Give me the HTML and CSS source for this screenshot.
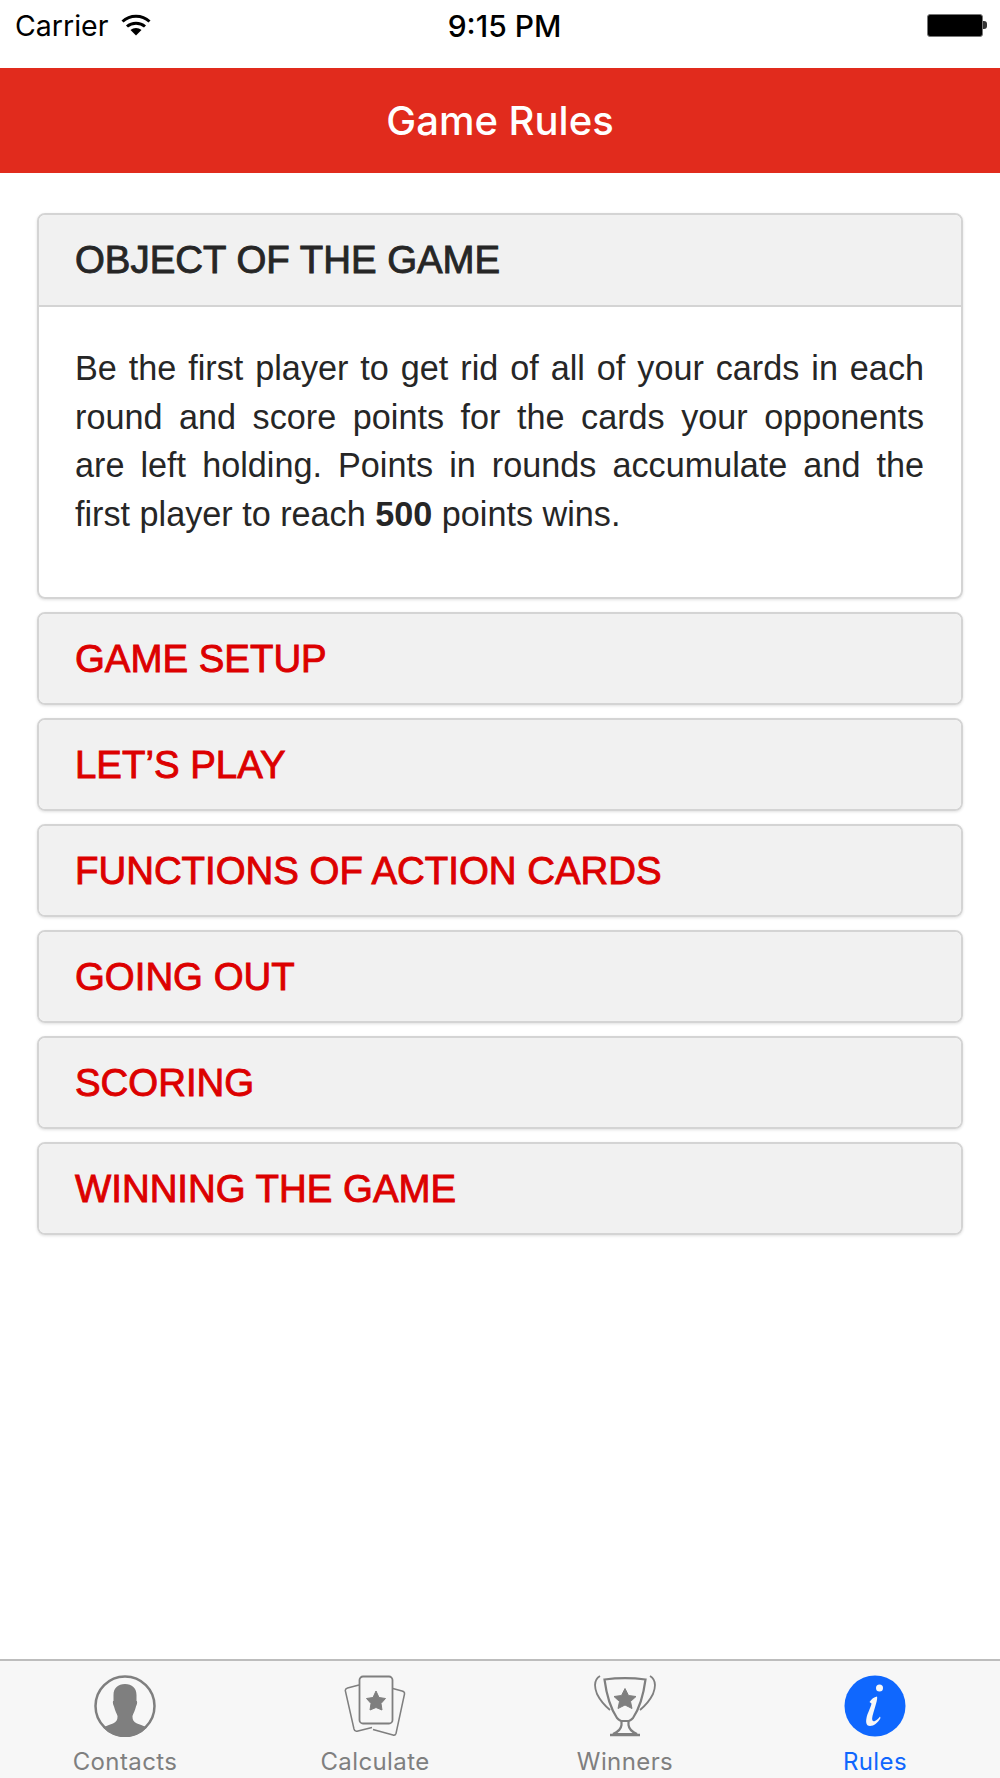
FILE: index.html
```html
<!doctype html>
<html>
    <head>
        <meta name="viewport" content="width=device-width, initial-scale=1">
        <title>Game Rules</title>
        <link rel="stylesheet" href="styles.css">
    </head>
    <body>
        <div class="status-bar">
            <div class="status-left">
                <span>Carrier</span>
                <svg class="wifi" viewBox="0 0 30 22" width="30" height="22">
                    <path d="M1.500 7.500C9 .5 21 .5 28.500 7.500" fill="none" stroke="#000" stroke-width="3"/>
                    <path d="M6 12.500C11 8 19 8 24 12.500" fill="none" stroke="#000" stroke-width="3"/>
                    <path d="M9.500 16C12.500 13.300 17.500 13.300 20.500 16L15 21.500Z" fill="#000"/>
                </svg>
            </div>
            <div class="status-time">9:15 PM</div>
            <div class="status-right">
                <div class="battery"></div>
                <div class="battery-tip"></div>
            </div>
        </div>
        <div class="nav-bar">Game Rules</div>
        <div class="content">
            <div class="panel">
                <div class="panel-heading panel-heading-open">OBJECT OF THE GAME</div>
                <div class="panel-body">
                    <p>Be the first player to get rid of all of your cards in each round and score points for the cards your opponents are left holding. Points in rounds accumulate and the first player to reach <strong>500</strong> points wins.</p>
                </div>
            </div>
            <div class="panel"><div class="panel-heading">GAME SETUP</div></div>
            <div class="panel"><div class="panel-heading">LET’S PLAY</div></div>
            <div class="panel"><div class="panel-heading">FUNCTIONS OF ACTION CARDS</div></div>
            <div class="panel"><div class="panel-heading">GOING OUT</div></div>
            <div class="panel"><div class="panel-heading">SCORING</div></div>
            <div class="panel"><div class="panel-heading">WINNING THE GAME</div></div>
        </div>
        <div class="tab-bar">
            <div class="tab">
                <svg viewBox="0 0 62 62" width="62" height="62">
                    <circle cx="31" cy="31" r="29.500" fill="none" stroke="#7f7f7f" stroke-width="2.500"/>
                    <path d="M31 9C38 9 42.500 13 42.500 20L42.500 26C43.500 26 43.300 29 42 31.500C41 36 39 39 38.500 41C38.300 45 39.500 47 43 48.500C47 50 50 51 53 52.500A29.500 29.500 0 0 1 9 52.500C12 51 15 50 19 48.500C22.500 47 23.700 45 23.500 41C23 39 21 36 20 31.500C18.700 29 18.500 26 19.500 26L19.500 20C19.500 13 24 9 31 9Z" fill="#7f7f7f"/>
                </svg>
                <span>Contacts</span>
            </div>
            <div class="tab">
                <svg viewBox="0 0 62 62" width="62" height="62">
                    <path d="M15 10L3.500 13C1.800 13.500 1 14.500 1.400 16L10 54C10.500 56 11.500 56.500 13 56.200L28 52.500" fill="none" stroke="#7f7f7f" stroke-width="1.500"/>
                    <path d="M47 13L58 16C60 16.500 60.800 17.500 60.500 19L52 58.500C51.500 60 50.500 60.500 49 60L29 54.500" fill="none" stroke="#7f7f7f" stroke-width="1.500"/>
                    <rect x="15.500" y="1.500" width="33" height="47" rx="3.500" fill="#f7f7f7" stroke="#7f7f7f" stroke-width="1.800"/>
                    <path d="M32 16L35 22.500L41.500 23.500L37 28.500L38 35L32 32.500L26 35L27 28.500L22.500 23.500L29 22.500Z" fill="#7f7f7f" stroke="#7f7f7f" stroke-linejoin="round"/>
                </svg>
                <span>Calculate</span>
            </div>
            <div class="tab">
                <svg viewBox="0 0 62 62" width="62" height="62">
                    <path d="M10.500 4.500C12 16 15 31 23 43C25 45 27 46 27.500 46L34.500 46C35 46 37 45 39 43C47 31 50 16 51.500 4.500C40 3 22 3 10.500 4.500Z" fill="none" stroke="#7f7f7f" stroke-width="2.200"/>
                    <path d="M6 1C1 4 -0.500 10 3 19C6 25 10 30 16 35" fill="none" stroke="#7f7f7f" stroke-width="1.800"/>
                    <path d="M56 1C61 4 62.500 10 59 19C56 25 52 30 46 35" fill="none" stroke="#7f7f7f" stroke-width="1.800"/>
                    <path d="M27.500 46L34.500 46L34.500 50C35 54 38 57 43 59L19 59C24 57 27 54 27.500 50Z" fill="none" stroke="#7f7f7f" stroke-width="2.200"/>
                    <path d="M16 60L46 60" stroke="#7f7f7f" stroke-width="2.500"/>
                    <path d="M31 13.500L34.500 20.500L42 21.500L36.500 26.500L38 33.500L31 30L24 33.500L25.500 26.500L20 21.500L27.500 20.500Z" fill="#7f7f7f" stroke="#7f7f7f" stroke-linejoin="round"/>
                </svg>
                <span>Winners</span>
            </div>
            <div class="tab tab-active">
                <svg viewBox="0 0 62 62" width="62" height="62">
                    <circle cx="31" cy="31" r="30.500" fill="#0f67fe"/>
                    <circle cx="35.500" cy="13" r="3.500" fill="#f7f7f7"/>
                    <path d="M25.500 27C27.500 24 30 22 33 21.500C34 24 31 32 28.500 41C27.500 45 28.500 47 31 46C32.500 45.500 34.500 43.500 36 41.500L36.500 43C34 47.500 30 51 26 51C22.500 51 21.500 47.500 22.500 43C23.500 38 27 32 27.500 28.500C26.800 27.800 26.200 27.500 25.500 27Z" fill="#f7f7f7"/>
                </svg>
                <span>Rules</span>
            </div>
        </div>
    </body>
</html>
```

FILE: styles.css
```css
html, body {
    margin: 0;
    padding: 0;
}
body {
    width: 1000px;
    height: 1778px;
    display: flex;
    flex-direction: column;
    overflow: hidden;
    background-color: #fff;
    font-family: 'Liberation Sans', Arial, sans-serif;
    color: #262626;
}
.status-bar {
    height: 68px;
    padding: 0 13px 0 15px;
    display: flex;
    align-items: center;
    justify-content: space-between;
    position: relative;
    font-family: Inter, sans-serif;
    font-size: 28.500px;
    color: #000;
}
.status-left {
    display: flex;
    align-items: center;
    gap: 13px;
    padding-bottom: 17px;
}
.wifi {
    margin-top: -2px;
}
.status-time {
    position: absolute;
    left: 9px;
    right: 0;
    top: 8px;
    text-align: center;
    font-size: 30px;
    font-weight: 500;
}
.status-right {
    display: flex;
    align-items: center;
    padding-bottom: 18px;
}
.battery {
    width: 54px;
    height: 21px;
    background-color: #000;
    border: 1px solid #777;
    border-radius: 3px;
}
.battery-tip {
    width: 4px;
    height: 8px;
    background-color: #333;
    border-radius: 0 3px 3px 0;
}
.nav-bar {
    height: 105px;
    line-height: 105px;
    background-color: #e12b1d;
    color: #fff;
    text-align: center;
    font-family: Inter, sans-serif;
    font-size: 40px;
    font-weight: 500;
}
.content {
    flex: 1;
    padding: 40px 37px 0;
    display: flex;
    flex-direction: column;
    gap: 13px;
}
.panel {
    border: 2px solid #d4d4d4;
    border-radius: 8px;
    box-shadow: 0 1px 3px rgba(0,0,0,0.12);
    overflow: hidden;
}
.panel-heading {
    height: 89px;
    line-height: 89px;
    padding-left: 36px;
    background-color: #f1f1f1;
    color: #dc0000;
    font-size: 38.400px;
    -webkit-text-stroke: 0.9px currentColor;
}
.panel-heading-open {
    height: 90px;
    line-height: 90px;
    color: #262626;
    border-bottom: 2px solid #d4d4d4;
}
.panel-body {
    padding: 37px 37px 59px 36px;
    font-size: 34.200px;
    line-height: 48.500px;
    text-align: justify;
}
.panel-body p {
    margin: 0;
}
.tab-bar {
    height: 117px;
    display: grid;
    grid-template-columns: 250px 250px 250px 250px;
    background-color: #f7f7f7;
    border-top: 2px solid #bdbdbd;
}
.tab {
    display: flex;
    flex-direction: column;
    align-items: center;
    padding-top: 14px;
    color: #7f7f7f;
    font-family: Inter, sans-serif;
    font-size: 24px;
    letter-spacing: 0.4px;
}
.tab svg {
    margin-bottom: 10px;
}
.tab-active {
    color: #0f67fe;
}
```
